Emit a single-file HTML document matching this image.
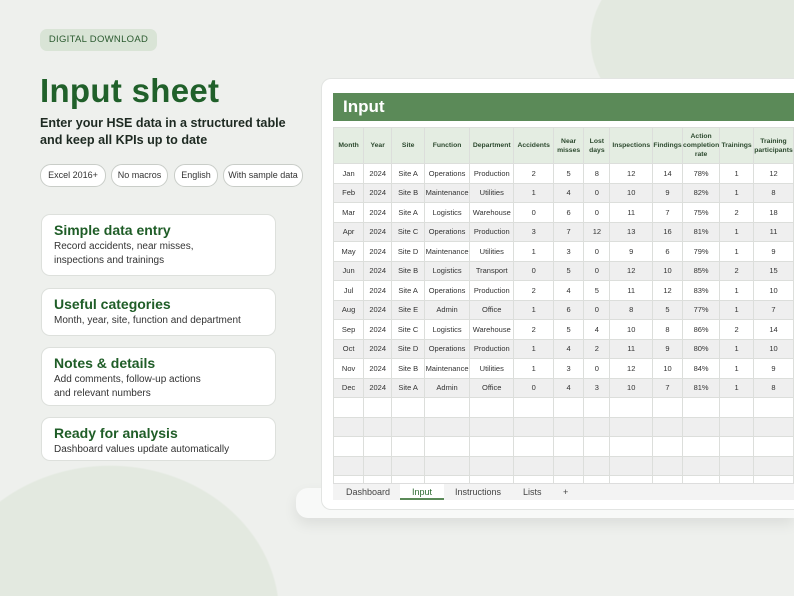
<!DOCTYPE html>
<html><head><meta charset="utf-8"><style>
*{margin:0;padding:0;box-sizing:border-box}
html,body{width:794px;height:596px;overflow:hidden}
body{background:radial-gradient(ellipse 130px 100px at 720px 40px,#e3e9e0 99%,transparent 100%),radial-gradient(ellipse 170px 150px at 110px 615px,#e3e9e0 99%,transparent 100%),#eef0ed;font-family:"Liberation Sans",sans-serif;position:relative}
.tag{position:absolute;left:40px;top:29px;width:117px;height:22px;border-radius:7px;background:#d9e4d6;color:#2b5a2f;font-size:9.5px;letter-spacing:.3px;line-height:22px;text-align:center}
h1{position:absolute;left:40px;top:72px;font-size:33px;font-weight:bold;color:#20602a;letter-spacing:.3px}
.sub{position:absolute;left:40px;top:115px;font-size:12.6px;font-weight:bold;color:#1e2a22;line-height:17px}
.pill{position:absolute;top:164px;height:23px;border:1px solid #c9cdc8;border-radius:11px;background:#fff;font-size:9px;color:#333;line-height:21px;text-align:center}
.card{position:absolute;left:41px;width:235px;background:#fff;border:1px solid #dde0dc;border-radius:9px;padding:7px 12px}
.card b{display:block;font-size:14px;color:#1f5d27;margin-bottom:2px}
.card span{font-size:10px;color:#333;line-height:14px;display:block}
.base{position:absolute;left:296px;top:488px;width:498px;height:30px;background:#f8f9f8;border-radius:12px 0 0 12px;box-shadow:0 6px 14px rgba(0,0,0,.08)}
.screen{position:absolute;left:321px;top:78px;width:473px;height:432px;background:#fff;border:1px solid #e2e4e2;border-right:none;border-radius:10px 0 0 10px}
.bar{position:absolute;left:333px;top:93px;width:461px;height:28px;background:#5b8a58;color:#fff;font-weight:bold;font-size:17px;padding-left:10px;line-height:28px}
table{position:absolute;left:333px;top:127px;border-collapse:collapse;table-layout:fixed;font-size:7.5px;color:#333}
td,th{border:1px solid #dcdedb;text-align:center;overflow:hidden;white-space:nowrap}
th{background:#e4ede2;height:36px;font-size:6.8px;color:#2d4a2f;font-weight:bold;white-space:normal;line-height:9px}
td{height:19.5px}
tr:nth-child(odd) td{background:#efefef}
.tabs{position:absolute;left:333px;top:483px;width:461px;height:17px;background:#f3f3f3;border-top:1px solid #ddd;font-size:9px;color:#444}
.tabs span{position:absolute;top:3px}
</style></head><body>
<div class="tag">DIGITAL DOWNLOAD</div>
<h1>Input sheet</h1>
<div class="sub">Enter your HSE data in a structured table<br>and keep all KPIs up to date</div>
<div class="pill" style="left:40px;width:66px">Excel 2016+</div>
<div class="pill" style="left:111px;width:57px">No macros</div>
<div class="pill" style="left:174px;width:44px">English</div>
<div class="pill" style="left:223px;width:80px">With sample data</div>
<div class="card" style="top:214px;height:62px"><b>Simple data entry</b><span>Record accidents, near misses,<br>inspections and trainings</span></div>
<div class="card" style="top:288px;height:48px"><b>Useful categories</b><span>Month, year, site, function and department</span></div>
<div class="card" style="top:347px;height:59px"><b>Notes &amp; details</b><span>Add comments, follow-up actions<br>and relevant numbers</span></div>
<div class="card" style="top:417px;height:44px"><b>Ready for analysis</b><span>Dashboard values update automatically</span></div>
<div class="base"></div>
<div class="screen"></div>
<div class="bar">Input</div>
<table>
<colgroup><col width="31"><col width="29"><col width="34"><col width="45"><col width="45"><col width="40"><col width="31"><col width="27"><col width="43"><col width="30"><col width="32"><col width="34"><col width="40"></colgroup>
<tr><th>Month</th><th>Year</th><th>Site</th><th>Function</th><th>Department</th><th>Accidents</th><th>Near misses</th><th>Lost days</th><th>Inspections</th><th>Findings</th><th>Action completion rate</th><th>Trainings</th><th>Training participants</th></tr>
<tr><td>Jan</td><td>2024</td><td>Site A</td><td>Operations</td><td>Production</td><td>2</td><td>5</td><td>8</td><td>12</td><td>14</td><td>78%</td><td>1</td><td>12</td></tr>
<tr><td>Feb</td><td>2024</td><td>Site B</td><td>Maintenance</td><td>Utilities</td><td>1</td><td>4</td><td>0</td><td>10</td><td>9</td><td>82%</td><td>1</td><td>8</td></tr>
<tr><td>Mar</td><td>2024</td><td>Site A</td><td>Logistics</td><td>Warehouse</td><td>0</td><td>6</td><td>0</td><td>11</td><td>7</td><td>75%</td><td>2</td><td>18</td></tr>
<tr><td>Apr</td><td>2024</td><td>Site C</td><td>Operations</td><td>Production</td><td>3</td><td>7</td><td>12</td><td>13</td><td>16</td><td>81%</td><td>1</td><td>11</td></tr>
<tr><td>May</td><td>2024</td><td>Site D</td><td>Maintenance</td><td>Utilities</td><td>1</td><td>3</td><td>0</td><td>9</td><td>6</td><td>79%</td><td>1</td><td>9</td></tr>
<tr><td>Jun</td><td>2024</td><td>Site B</td><td>Logistics</td><td>Transport</td><td>0</td><td>5</td><td>0</td><td>12</td><td>10</td><td>85%</td><td>2</td><td>15</td></tr>
<tr><td>Jul</td><td>2024</td><td>Site A</td><td>Operations</td><td>Production</td><td>2</td><td>4</td><td>5</td><td>11</td><td>12</td><td>83%</td><td>1</td><td>10</td></tr>
<tr><td>Aug</td><td>2024</td><td>Site E</td><td>Admin</td><td>Office</td><td>1</td><td>6</td><td>0</td><td>8</td><td>5</td><td>77%</td><td>1</td><td>7</td></tr>
<tr><td>Sep</td><td>2024</td><td>Site C</td><td>Logistics</td><td>Warehouse</td><td>2</td><td>5</td><td>4</td><td>10</td><td>8</td><td>86%</td><td>2</td><td>14</td></tr>
<tr><td>Oct</td><td>2024</td><td>Site D</td><td>Operations</td><td>Production</td><td>1</td><td>4</td><td>2</td><td>11</td><td>9</td><td>80%</td><td>1</td><td>10</td></tr>
<tr><td>Nov</td><td>2024</td><td>Site B</td><td>Maintenance</td><td>Utilities</td><td>1</td><td>3</td><td>0</td><td>12</td><td>10</td><td>84%</td><td>1</td><td>9</td></tr>
<tr><td>Dec</td><td>2024</td><td>Site A</td><td>Admin</td><td>Office</td><td>0</td><td>4</td><td>3</td><td>10</td><td>7</td><td>81%</td><td>1</td><td>8</td></tr>
<tr><td></td><td></td><td></td><td></td><td></td><td></td><td></td><td></td><td></td><td></td><td></td><td></td><td></td></tr>
<tr><td></td><td></td><td></td><td></td><td></td><td></td><td></td><td></td><td></td><td></td><td></td><td></td><td></td></tr>
<tr><td></td><td></td><td></td><td></td><td></td><td></td><td></td><td></td><td></td><td></td><td></td><td></td><td></td></tr>
<tr><td></td><td></td><td></td><td></td><td></td><td></td><td></td><td></td><td></td><td></td><td></td><td></td><td></td></tr>
<tr><td style="height:7px"></td><td></td><td></td><td></td><td></td><td></td><td></td><td></td><td></td><td></td><td></td><td></td><td></td></tr>
</table>
<div class="tabs">
<span style="left:13px">Dashboard</span>
<span style="left:67px;top:0;height:16px;width:44px;background:#fff;border-bottom:2px solid #5b8a58;color:#2d6a30;text-align:center;padding-top:3px">Input</span>
<span style="left:122px">Instructions</span>
<span style="left:190px">Lists</span>
<span style="left:230px">+</span>
</div>
</body></html>
